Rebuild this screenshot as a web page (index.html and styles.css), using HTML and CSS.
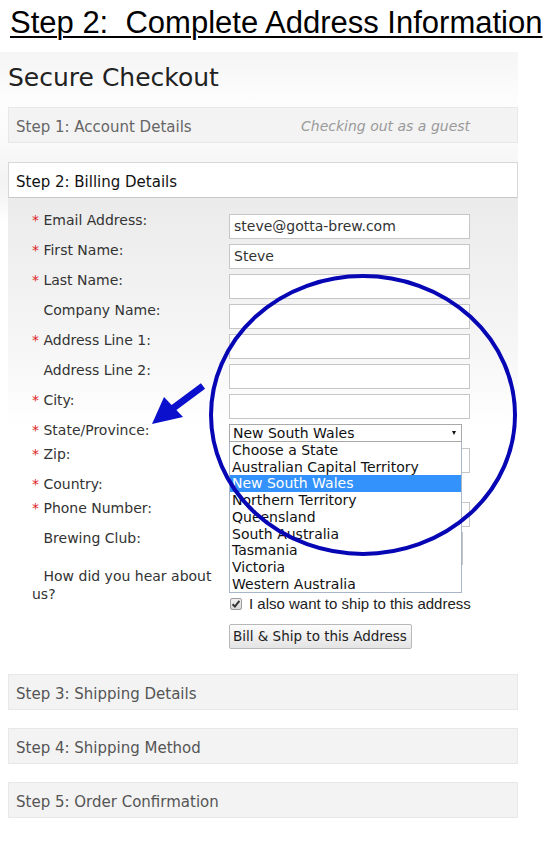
FILE: index.html
```html
<!DOCTYPE html>
<html lang="en">
<head>
<meta charset="utf-8">
<title>Step 2: Complete Address Information</title>
<link rel="stylesheet" href="styles.css">
</head>
<body>
<h1 class="title">Step 2:&nbsp; Complete Address Information</h1>
<div class="page">
  <h2 class="heading">Secure Checkout</h2>

  <div class="step step-done">
    <span class="step-name">Step 1: Account Details</span>
    <span class="step-note">Checking out as a guest</span>
  </div>

  <div class="step step-active">
    <span class="step-name">Step 2: Billing Details</span>
  </div>

  <div class="billing">
    <div class="row"><div class="lbl req"><span class="star">*</span> Email Address:</div><div class="ctl"><div class="input">steve@gotta-brew.com</div></div></div>
    <div class="row"><div class="lbl req"><span class="star">*</span> First Name:</div><div class="ctl"><div class="input">Steve</div></div></div>
    <div class="row"><div class="lbl req"><span class="star">*</span> Last Name:</div><div class="ctl"><div class="input"></div></div></div>
    <div class="row"><div class="lbl">Company Name:</div><div class="ctl"><div class="input"></div></div></div>
    <div class="row"><div class="lbl req"><span class="star">*</span> Address Line 1:</div><div class="ctl"><div class="input"></div></div></div>
    <div class="row"><div class="lbl">Address Line 2:</div><div class="ctl"><div class="input"></div></div></div>
    <div class="row"><div class="lbl req"><span class="star">*</span> City:</div><div class="ctl"><div class="input"></div></div></div>
    <div class="row row-select"><div class="lbl req"><span class="star">*</span> State/Province:</div>
      <div class="ctl">
        <div class="select">New South Wales<span class="caret"></span></div>
        <ul class="options">
          <li>Choose a State</li>
          <li>Australian Capital Territory</li>
          <li class="selected">New South Wales</li>
          <li>Northern Territory</li>
          <li>Queensland</li>
          <li>South Australia</li>
          <li>Tasmania</li>
          <li>Victoria</li>
          <li>Western Australia</li>
        </ul>
      </div>
    </div>
    <div class="row"><div class="lbl req"><span class="star">*</span> Zip:</div><div class="ctl"><div class="input"></div></div></div>
    <div class="row row-select"><div class="lbl req"><span class="star">*</span> Country:</div><div class="ctl"><div class="select"><span class="caret"></span></div></div></div>
    <div class="row"><div class="lbl req"><span class="star">*</span> Phone Number:</div><div class="ctl"><div class="input"></div></div></div>
    <div class="row"><div class="lbl">Brewing Club:</div><div class="ctl"><div class="select select-tall"></div></div></div>
    <div class="row row-how"><div class="lbl">How did you hear about us?</div><div class="ctl"><div class="select select-how"></div></div></div>

    <div class="opts">
      <label class="check">
        <span class="box"><svg width="12" height="12" viewBox="0 0 12 12"><path d="M2.6 6.2 L4.9 8.6 L9.4 2.9" fill="none" stroke="#333" stroke-width="2"/></svg></span>
        I also want to ship to this address
      </label>
      <div class="btn">Bill &amp; Ship to this Address</div>
    </div>
  </div>

  <div class="step"><span class="step-name">Step 3: Shipping Details</span></div>
  <div class="step"><span class="step-name">Step 4: Shipping Method</span></div>
  <div class="step"><span class="step-name">Step 5: Order Confirmation</span></div>
</div>

<svg class="annot" width="553" height="847" viewBox="0 0 553 847">
  <ellipse cx="363" cy="415" rx="152" ry="139" fill="none" stroke="#0606b4" stroke-width="4"/>
  <line x1="203" y1="386" x2="172" y2="409" stroke="#0a10cc" stroke-width="7"/>
  <polygon points="152,424 164,397 183,417" fill="#0a10cc"/>
</svg>
</body>
</html>
```

FILE: styles.css
```css
html, body {
  margin: 0;
  padding: 0;
  background: #fff;
}

body {
  position: relative;
  width: 553px;
  height: 847px;
  overflow: hidden;
  font-family: "DejaVu Sans", sans-serif;
  color: #333;
}

.title {
  margin: 0;
  padding: 5px 0 0 10px;
  height: 52px;
  box-sizing: border-box;
  font-family: "Liberation Sans", Arial, sans-serif;
  font-weight: normal;
  font-size: 31px;
  line-height: 36px;
  color: #000;
  text-decoration: underline;
  text-decoration-thickness: 2px;
  text-underline-offset: 3px;
  white-space: nowrap;
}

.page {
  width: 510px;
  padding: 11px 0 0 8px;
  background: linear-gradient(to bottom, #f5f5f5 0, #fdfdfd 50px, #fafafa 90px, #f3f3f3 130px, #f6f6f6 146px, #ffffff 170px);
}

.heading {
  margin: 0 0 14px 0;
  font-weight: normal;
  font-size: 25px;
  line-height: 30px;
  color: #222;
}

.step {
  display: grid;
  grid-template-columns: 285px auto;
  height: 36px;
  box-sizing: border-box;
  padding: 3px 0 0 7px;
  background: #f3f3f3;
  border: 1px solid #e8e8e8;
  font-size: 15px;
  line-height: 32px;
  color: #555;
  margin-bottom: 18px;
}

.step-done {
  margin-bottom: 19px;
  color: #666;
}

.step-note {
  font-style: italic;
  font-size: 14px;
  line-height: 30px;
  color: #9a9a9a;
}

.step-active {
  background: #fff;
  border: 1px solid #d8d8d8;
  border-bottom-color: #c8c8c8;
  color: #111;
  margin-bottom: 0;
}

.billing {
  padding: 16px 0 25px 24px;
  background: linear-gradient(to bottom, #ebebeb 0, #f6f6f6 150px, #ffffff 230px);
}

.row {
  display: flex;
  gap: 7px;
  margin-bottom: 5px;
}

.row-select {
  margin-bottom: 6px;
}

.row-how {
  height: 23px;
  margin-bottom: 2px;
}

.lbl {
  width: 190px;
  margin-top: -3px;
  font-size: 14px;
  line-height: 18px;
  color: #333;
  text-indent: 11.5px;
}

.lbl.req {
  text-indent: 0;
}

.star {
  color: #dd2222;
}

.ctl {
  position: relative;
}

.input {
  width: 241px;
  height: 25px;
  box-sizing: border-box;
  border: 1px solid #c6c6c6;
  background: #fff;
  padding-left: 4px;
  font-size: 14px;
  line-height: 23px;
  color: #333;
}

.select {
  position: relative;
  width: 233px;
  height: 18px;
  box-sizing: border-box;
  border: 1px solid #a9a9a9;
  background: #fff;
  padding-left: 3px;
  font-size: 14px;
  line-height: 16px;
  color: #111;
}

.select-tall {
  height: 33px;
  width: 234px;
  border-color: #c6c6c6;
}

.select-how {
  height: 23px;
  border-color: #c6c6c6;
}

.caret {
  position: absolute;
  right: 5px;
  top: 6px;
  width: 0;
  height: 0;
  border-left: 2.5px solid transparent;
  border-right: 2.5px solid transparent;
  border-top: 4px solid #111;
}

.options {
  position: absolute;
  z-index: 5;
  left: 0;
  top: 18px;
  width: 233px;
  margin: 0;
  padding: 0;
  list-style: none;
  box-sizing: border-box;
  border: 1px solid #a8b6c8;
  border-top: none;
  background: #fff;
  font-size: 14px;
  line-height: 16.7px;
  color: #111;
}

.options li {
  padding-left: 2px;
  white-space: nowrap;
}

.options li.selected {
  background: #3392fb;
  color: #fff;
}

.opts {
  margin-left: 197px;
}

.check {
  display: flex;
  align-items: center;
  gap: 7px;
  margin-left: 1px;
  font-family: "Liberation Sans", Arial, sans-serif;
  font-size: 15px;
  line-height: 17px;
  color: #222;
}

.box {
  display: block;
  width: 12px;
  height: 12px;
  box-sizing: border-box;
  border: 1px solid #9d9d9d;
  border-radius: 2px;
  background: linear-gradient(#f0f0f0, #d8d8d8);
  overflow: hidden;
}

.box svg {
  display: block;
  margin: -1px 0 0 -1px;
}

.btn {
  display: inline-block;
  margin-top: 12px;
  height: 25px;
  box-sizing: border-box;
  padding: 0 4px 0 3px;
  border: 1px solid #b8b8b8;
  border-radius: 2px;
  background: linear-gradient(#fbfbfb, #e4e4e4);
  font-size: 13.5px;
  line-height: 23px;
  color: #222;
}

.annot {
  position: absolute;
  left: 0;
  top: 0;
  z-index: 10;
  pointer-events: none;
}
```
